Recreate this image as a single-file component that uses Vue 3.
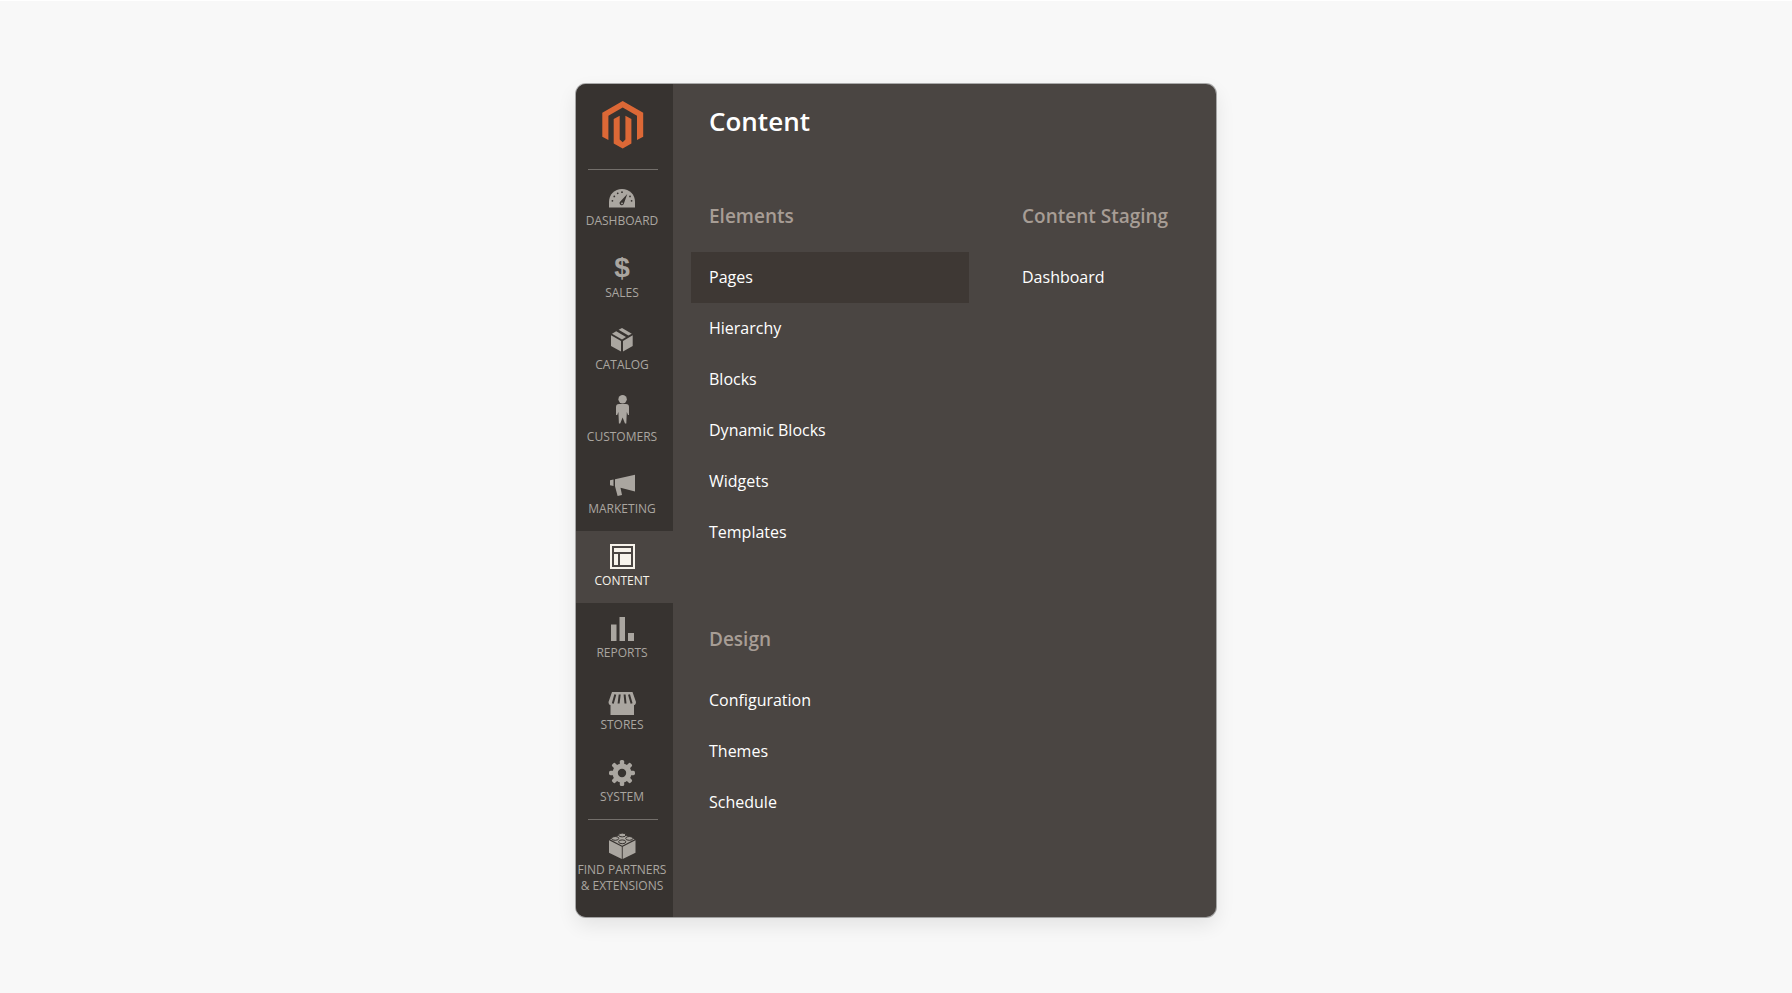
<script setup>
import { ref } from 'vue'

const active = ref('content')

const navItems = [
  { id: 'dashboard', label: 'Dashboard' },
  { id: 'sales', label: 'Sales' },
  { id: 'catalog', label: 'Catalog' },
  { id: 'customers', label: 'Customers' },
  { id: 'marketing', label: 'Marketing' },
  { id: 'content', label: 'Content' },
  { id: 'reports', label: 'Reports' },
  { id: 'stores', label: 'Stores' },
  { id: 'system', label: 'System' },
]

const columns = [
  [
    { title: 'Elements', links: ['Pages', 'Hierarchy', 'Blocks', 'Dynamic Blocks', 'Widgets', 'Templates'] },
    { title: 'Design', links: ['Configuration', 'Themes', 'Schedule'] },
  ],
  [{ title: 'Content Staging', links: ['Dashboard'] }],
]

const current = ref('Pages')
const gearTeeth = [0, 45, 90, 135, 180, 225, 270, 315]
</script>

<template>
  <main class="page">
    <div class="admin">
      <nav class="sidebar">
        <a href="#" class="logo" aria-label="Home">
          <svg viewBox="0 0 42 48" width="42" height="48">
            <path d="M20.7 0 41.2 11.8V35.7L35 39V14.8L20.7 6.6 6.4 14.8V39L.3 35.7V11.8Z" />
            <path d="M11.7 18 17.7 14.7V38.5L20.7 41.2 23.4 38.5V14.7L29.4 18V42.6L20.7 47.6 11.7 42.6Z" />
          </svg>
        </a>
        <ul class="nav">
          <li v-for="item in navItems" :key="item.id">
            <a href="#" :class="['nav-item', { active: active === item.id }]" @click.prevent="active = item.id">
              <svg class="icon" viewBox="0 0 34 34" aria-hidden="true">
                <g v-if="item.id === 'dashboard'">
                  <path d="M4 28.5V23C4 15.5 9.5 10 17 10S30 15.5 30 23V28.5Z" />
                  <g class="cut">
                    <path d="M22.3 15 18.9 24.5A2.2 2.2 0 1 1 15.3 22.4Z" />
                    <circle cx="7.4" cy="21.8" r=".9" /><circle cx="9.3" cy="17.4" r=".9" />
                    <circle cx="12.7" cy="14.3" r=".9" /><circle cx="17" cy="13.2" r=".9" />
                    <circle cx="25" cy="17.4" r=".9" /><circle cx="26.6" cy="21.8" r=".9" />
                  </g>
                  <circle cx="17" cy="24.3" r=".9" />
                </g>
                <text v-else-if="item.id === 'sales'" x="17" y="26" class="dollar">$</text>
                <g v-else-if="item.id === 'catalog'">
                  <path d="M6 12.3 16 18V28.5L6 23Z M18 18 27.7 12.3V23L18 28.5Z" />
                  <path d="M13.6 6.8 17 5 26.8 10.8 23.4 12.6Z M7 10.8 11.2 8.3 21 14 17 16.4Z" />
                </g>
                <g v-else-if="item.id === 'customers'">
                  <circle cx="17.6" cy="4.2" r="4.2" />
                  <path d="M14 9H21C23 9 24 10.2 24 12V20H23L21.8 17 21.3 28.5H20L17.6 22.5 15.2 28.5H13.9L13.4 17 12.2 20H11V12C11 10.2 12 9 14 9Z" />
                </g>
                <path v-else-if="item.id === 'marketing'" d="M5 13.2 8.5 12.4V19L5 18.3Z M10 12.3 30 7.7V24.5L15.5 20.8 17 28 12.6 29 10 19.3Z" />
                <g v-else-if="item.id === 'content'">
                  <path fill-rule="evenodd" d="M5 5H30V30H5Z M7 7V28H28V7Z" />
                  <path d="M9 9H26V13H9Z M9 15H13V26H9Z M15 15H26V26H15Z" />
                </g>
                <path v-else-if="item.id === 'reports'" d="M6 13.5H11.5V30H6Z M14.5 6H20V30H14.5Z M23 22H29V30H23Z" />
                <g v-else-if="item.id === 'stores'">
                  <path d="M7 9H27.5L31 19C31 21.5 29.5 22 29 22V32H5.5V22C5 22 3.5 21.5 3.5 19Z" />
                  <path class="stripe" d="M10.3 11.5 7.8 20.5M14.7 11.5 13.6 20.5M19.6 11.5 20.5 20.5M24 11.5 26.6 20.5" />
                </g>
                <g v-else-if="item.id === 'system'">
                  <rect v-for="deg in gearTeeth" :key="deg" x="14.8" y="5" width="4.4" height="7" rx="1.6" :transform="`rotate(${deg} 17 18)`" />
                  <path fill-rule="evenodd" d="M17 8.5A9.5 9.5 0 1 1 17 27.5A9.5 9.5 0 1 1 17 8.5Z M17 13.8A4.2 4.2 0 1 0 17 22.2A4.2 4.2 0 1 0 17 13.8Z" />
                </g>
              </svg>
              <span>{{ item.label }}</span>
            </a>
          </li>
        </ul>
        <a href="#" class="nav-item partners">
          <svg class="icon" viewBox="0 0 34 34" aria-hidden="true">
            <path d="M4 12.3 16.8 18.8V31L4 24.8Z M17.7 18.8 30.5 12.3V24.8L17.7 31Z" />
            <path d="M5 11.3 17 6 29.6 11.3 17.2 17.8Z" />
            <g class="stud">
              <ellipse cx="17.2" cy="7" rx="3.6" ry="1.9" />
              <ellipse cx="10.2" cy="10.4" rx="3.6" ry="1.9" />
              <ellipse cx="24.3" cy="10.4" rx="3.6" ry="1.9" />
              <ellipse cx="17.2" cy="13.8" rx="3.6" ry="1.9" />
            </g>
          </svg>
          <span>Find Partners<br />&amp; Extensions</span>
        </a>
      </nav>

      <section class="panel">
        <h1>Content</h1>
        <div class="columns">
          <div v-for="(groups, i) in columns" :key="i" class="column">
            <div v-for="group in groups" :key="group.title" class="group">
              <h2>{{ group.title }}</h2>
              <ul>
                <li v-for="link in group.links" :key="link">
                  <a href="#" :class="{ current: current === link }" @click.prevent="current = link">{{ link }}</a>
                </li>
              </ul>
            </div>
          </div>
        </div>
      </section>
    </div>
  </main>
</template>

<style>
body { margin: 0; background: #f8f8f8; }
</style>

<style scoped>
.page { padding: 83px 24px 75px; border-top: 1px solid #fff; font-family: "Open Sans", "Noto Sans", sans-serif; }
ul { list-style: none; margin: 0; padding: 0; }
a { color: inherit; text-decoration: none; }

.admin {
  display: flex;
  max-width: 640px;
  margin: 0 auto;
  border-radius: 10px;
  overflow: hidden;
  background: #4a4542;
  box-shadow: 0 0 0 1px rgba(0, 0, 0, 0.3), 0 8px 20px rgba(0, 0, 0, 0.09);
}

.sidebar { flex: 0 0 97px; box-sizing: border-box; padding: 17px 0 23px; background: #373330; color: #aaa6a0; }
.logo { display: block; }
.logo svg { display: block; margin: 0 auto 20px; padding-right: 4px; fill: #dc6836; }
.logo::after, .partners::before { content: ""; display: block; height: 1px; margin: 0 15px 0 12px; background: #736f6b; }
.nav { padding-top: 1px; }

.nav-item {
  display: flex;
  flex-direction: column;
  align-items: center;
  padding: 8px 5px 14px 0;
  font-size: 12px;
  line-height: 16px;
  text-align: center;
  text-transform: uppercase;
  white-space: nowrap;
}
.nav-item.active { background: #4a4542; color: #f7f3eb; }
.partners { padding-top: 0; padding-bottom: 0; }
.partners::before { align-self: stretch; margin: 0 10px 8px 12px; }

.icon { width: 34px; height: 34px; fill: currentColor; }
.cut { fill: #373330; }
.dollar { font: bold 28px "Liberation Sans", sans-serif; text-anchor: middle; }
.stripe { fill: none; stroke: #373330; stroke-width: 2; }
.stud { stroke: #373330; stroke-width: 1; }

.panel { flex: 1; min-width: 0; padding: 18px 0 0 18px; color: #fff; }
h1 { margin: 0 18px 61px; font-size: 26px; line-height: 38px; font-weight: 600; }
.columns { display: grid; grid-template-columns: 278px 1fr; column-gap: 35px; }
h2 { margin: 0; padding: 0 18px; font-size: 19px; line-height: 30px; font-weight: 600; color: #a79d95; white-space: nowrap; }
.group ul { padding: 21px 0 66px; }
.group li a { display: block; padding: 0 18px; font-size: 16px; line-height: 51px; }
.group li a.current { background: #3e3834; }
</style>
